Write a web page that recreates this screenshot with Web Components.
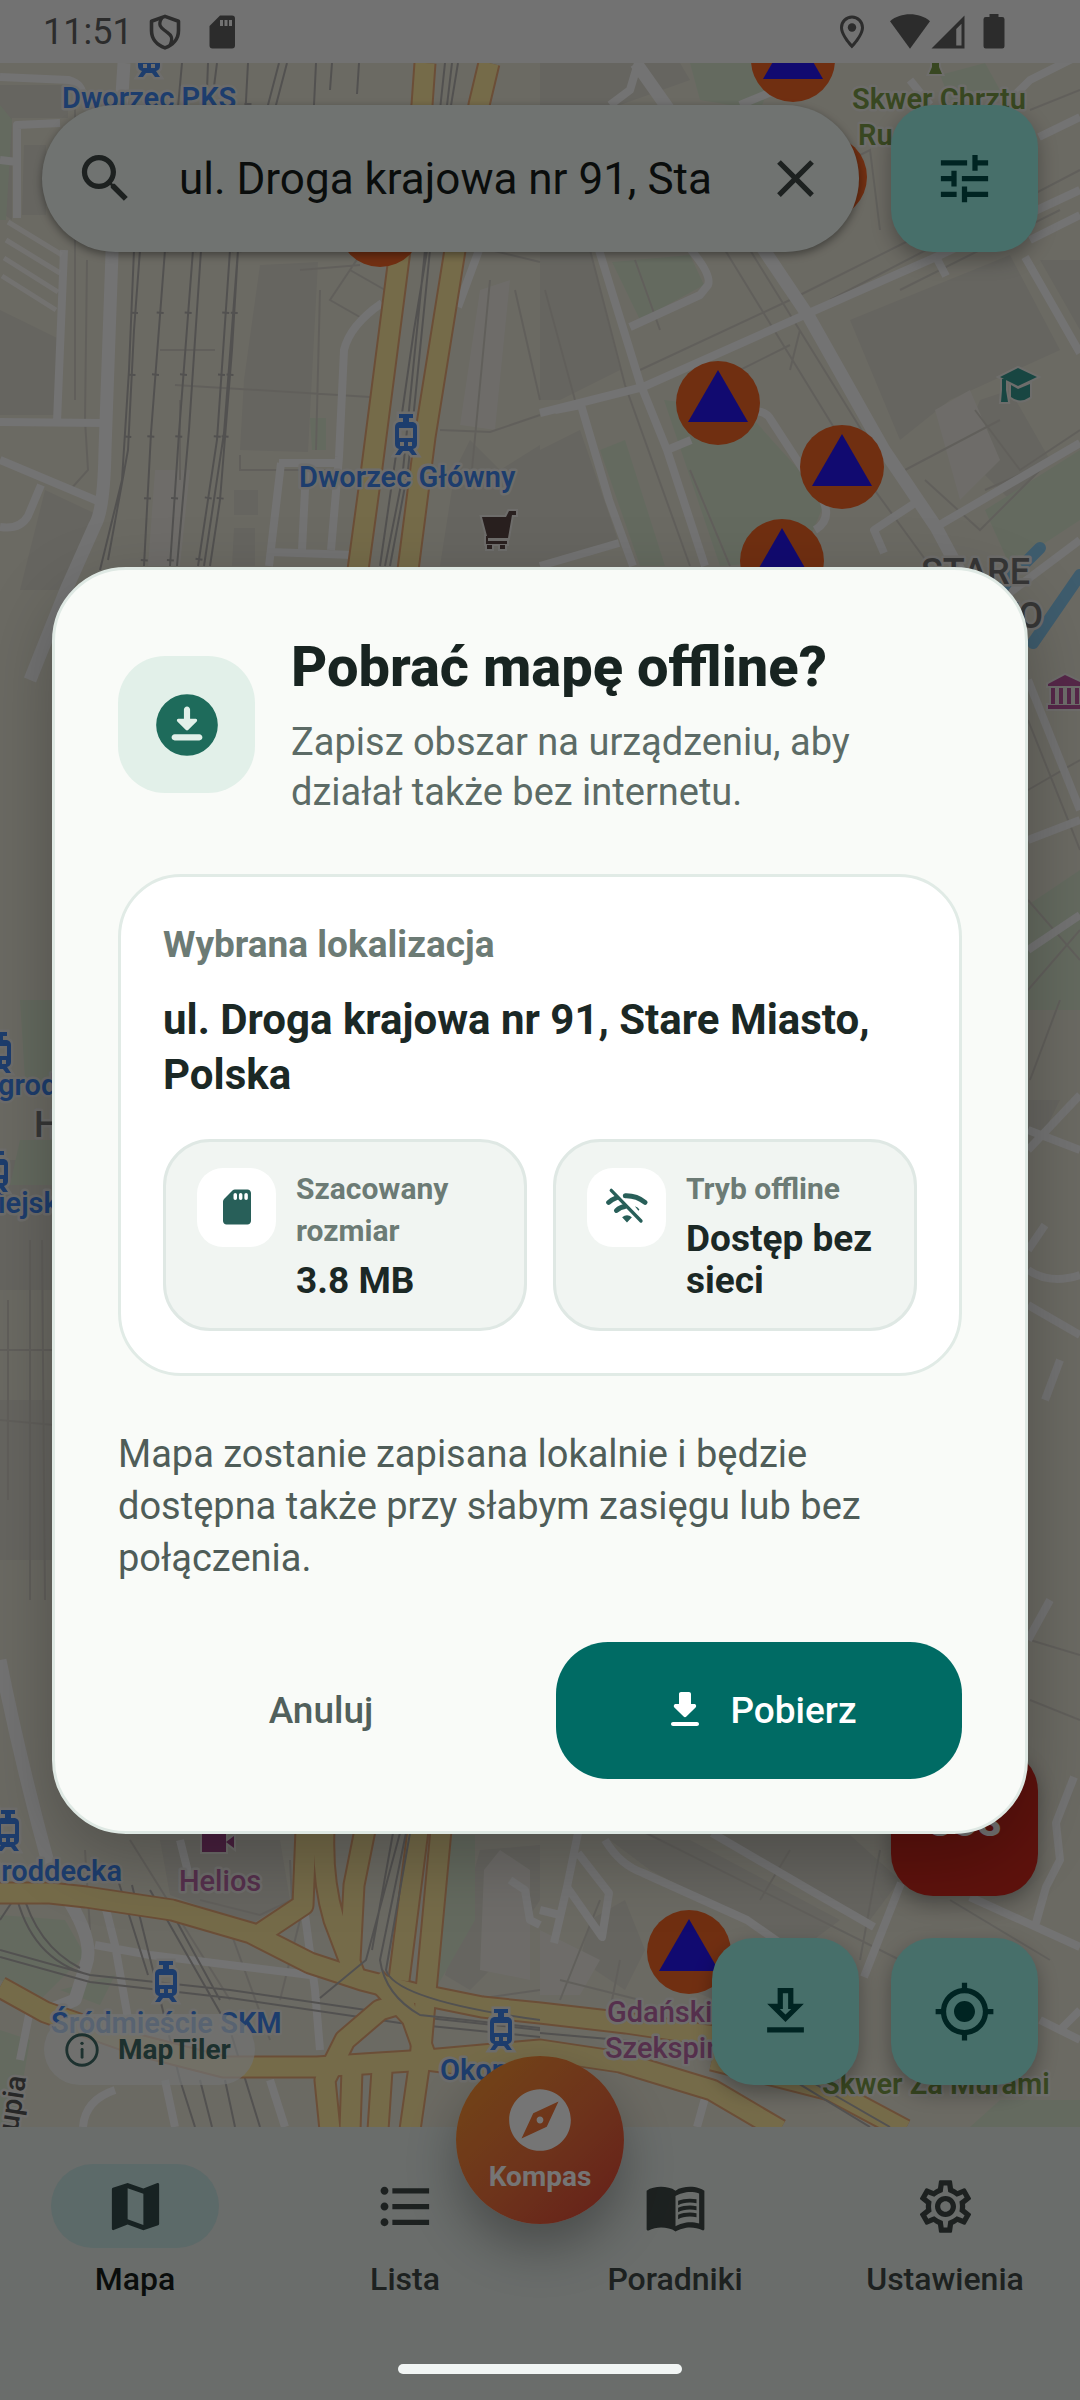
<!DOCTYPE html>
<html lang="pl">
<head>
<meta charset="utf-8">
<meta name="viewport" content="width=device-width, initial-scale=1">
<title>Mapa</title>
<style>
  body {
    margin: 0;
    font-family: Roboto, "Noto Sans", sans-serif;
    background: #f8f8f8;
  }
</style>
</head>
<body>

<app-screen>
  <status-bar slot="status" time="11:51"></status-bar>

  <city-map slot="map"></city-map>
  <search-bar slot="search" value="ul. Droga krajowa nr 91, Sta"></search-bar>
  <map-fab slot="search" icon="tune" label="Filtry"></map-fab>

  <map-credit slot="credit">MapTiler</map-credit>
  <map-fab slot="fabs" class="sos" variant="danger" label="SOS">SOS</map-fab>
  <map-fab slot="fabs" icon="download-outline" label="Pobierz mapę"></map-fab>
  <map-fab slot="fabs" icon="location" label="Moja lokalizacja"></map-fab>

  <app-nav slot="nav">
    <nav-item icon="map" active>Mapa</nav-item>
    <nav-item icon="list">Lista</nav-item>
    <nav-item icon="book">Poradniki</nav-item>
    <nav-item icon="settings">Ustawienia</nav-item>
    <compass-button slot="center">Kompas</compass-button>
  </app-nav>

  <offline-dialog slot="dialog">
    <span slot="title">Pobrać mapę offline?</span>
    <span slot="subtitle">Zapisz obszar na urządzeniu, aby<br>działał także bez internetu.</span>
    <location-card>
      <span slot="label">Wybrana lokalizacja</span>
      <span slot="place">ul. Droga krajowa nr 91, Stare Miasto, Polska</span>
      <stat-tile icon="sd" label="Szacowany rozmiar">3.8 MB</stat-tile>
      <stat-tile icon="wifi-off" label="Tryb offline">Dostęp bez sieci</stat-tile>
    </location-card>
    <span slot="note">Mapa zostanie zapisana lokalnie i będzie<br>dostępna także przy słabym zasięgu lub bez<br>połączenia.</span>
  </offline-dialog>
</app-screen>

<script>
const icons = {
  search: '<path d="M15.5 14h-.79l-.28-.27C15.41 12.59 16 11.11 16 9.5 16 5.91 13.09 3 9.5 3S3 5.91 3 9.5 5.91 16 9.5 16c1.61 0 3.09-.59 4.23-1.57l.27.28v.79l5 4.99L20.49 19l-4.99-5zm-6 0C7.01 14 5 11.99 5 9.5S7.01 5 9.5 5 14 7.01 14 9.5 11.99 14 9.5 14z"/>',
  close: '<path d="M19 6.41 17.59 5 12 10.59 6.41 5 5 6.41 10.59 12 5 17.59 6.41 19 12 13.41 17.59 19 19 17.59 13.41 12z"/>',
  tune: '<path d="M3 17v2h6v-2H3zM3 5v2h10V5H3zm10 16v-2h8v-2h-8v-2h-2v6h2zM7 9v2H3v2h4v2h2V9H7zm14 4v-2H11v2h10zm-6-4h2V7h4V5h-4V3h-2v6z"/>',
  'download-outline': '<path d="M13 5v6h1.17L12 13.17 9.83 11H11V5h2m2-2H9v6H5l7 7 7-7h-4V3zm4 15H5v2h14v-2z"/>',
  location: '<path d="M12 8c-2.21 0-4 1.79-4 4s1.79 4 4 4 4-1.79 4-4-1.79-4-4-4zm8.94 3c-.46-4.17-3.77-7.48-7.94-7.94V1h-2v2.06C6.83 3.52 3.52 6.83 3.06 11H1v2h2.06c.46 4.17 3.77 7.48 7.94 7.94V23h2v-2.06c4.17-.46 7.48-3.77 7.94-7.94H23v-2h-2.06zM12 19c-3.87 0-7-3.13-7-7s3.13-7 7-7 7 3.13 7 7-3.13 7-7 7z"/>',
  map: '<path d="M20.5 3l-.16.03L15 5.1 9 3 3.36 4.9c-.21.07-.36.25-.36.48V20.5c0 .28.22.5.5.5l.16-.03L9 18.9l6 2.1 5.64-1.9c.21-.07.36-.25.36-.48V3.5c0-.28-.22-.5-.5-.5zM15 19l-6-2.11V5l6 2.11V19z"/>',
  list: '<path d="M4 10.5c-.83 0-1.5.67-1.5 1.5s.67 1.5 1.5 1.5 1.5-.67 1.5-1.5-.67-1.5-1.5-1.5zm0-6c-.83 0-1.5.67-1.5 1.5S3.17 7.5 4 7.5 5.5 6.83 5.5 6 4.83 4.5 4 4.5zm0 12c-.83 0-1.5.68-1.5 1.5s.68 1.5 1.5 1.5 1.5-.68 1.5-1.5-.67-1.5-1.5-1.5zM7 19h14v-2H7v2zm0-6h14v-2H7v2zm0-8v2h14V5H7z"/>',
  book: '<path d="M21 5c-1.11-.35-2.33-.5-3.5-.5-1.95 0-4.05.4-5.5 1.5-1.45-1.1-3.55-1.5-5.5-1.5S2.45 4.9 1 6v14.65c0 .25.25.5.5.5.1 0 .15-.05.25-.05C3.1 20.45 5.05 20 6.5 20c1.95 0 4.05.4 5.5 1.5 1.35-.85 3.8-1.5 5.5-1.5 1.65 0 3.35.3 4.75 1.05.1.05.15.05.25.05.25 0 .5-.25.5-.5V6c-.6-.45-1.25-.75-2-1zm0 13.5c-1.1-.35-2.3-.5-3.5-.5-1.7 0-4.15.65-5.5 1.5V8c1.35-.85 3.8-1.5 5.5-1.5 1.2 0 2.4.15 3.5.5v11.5z"/><path d="M17.5 10.5c.88 0 1.73.09 2.5.26V9.24c-.79-.15-1.64-.24-2.5-.24-1.7 0-3.24.29-4.5.83v1.66c1.13-.64 2.7-.99 4.5-.99zM13 12.49v1.66c1.13-.64 2.7-.99 4.5-.99.88 0 1.73.09 2.5.26V11.9c-.79-.15-1.64-.24-2.5-.24-1.7 0-3.24.3-4.5.83zM17.5 14.33c-1.7 0-3.24.29-4.5.83v1.66c1.13-.64 2.7-.99 4.5-.99.88 0 1.73.09 2.5.26v-1.52c-.79-.16-1.64-.24-2.5-.24z"/>',
  settings: '<path d="M19.43 12.98c.04-.32.07-.64.07-.98s-.03-.66-.07-.98l2.11-1.65c.19-.15.24-.42.12-.64l-2-3.46c-.09-.16-.26-.25-.44-.25-.06 0-.12.01-.17.03l-2.49 1c-.52-.4-1.08-.73-1.69-.98l-.38-2.65C14.46 2.18 14.25 2 14 2h-4c-.25 0-.46.18-.49.42l-.38 2.65c-.61.25-1.17.59-1.69.98l-2.49-1c-.06-.02-.12-.03-.18-.03-.17 0-.34.09-.43.25l-2 3.46c-.13.22-.07.49.12.64l2.11 1.65c-.04.32-.07.65-.07.98s.03.66.07.98l-2.11 1.65c-.19.15-.24.42-.12.64l2 3.46c.09.16.26.25.44.25.06 0 .12-.01.17-.03l2.49-1c.52.4 1.08.73 1.69.98l.38 2.65c.03.24.24.42.49.42h4c.25 0 .46-.18.49-.42l.38-2.65c.61-.25 1.17-.59 1.69-.98l2.49 1c.06.02.12.03.18.03.17 0 .34-.09.43-.25l2-3.46c.12-.22.07-.49-.12-.64l-2.11-1.65zm-1.98-1.71c.04.31.05.52.05.73 0 .21-.02.43-.05.73l-.14 1.13.89.7 1.08.84-.7 1.21-1.27-.51-1.04-.42-.9.68c-.43.32-.84.56-1.25.73l-1.06.43-.16 1.13-.2 1.35h-1.4l-.19-1.35-.16-1.13-1.06-.43c-.43-.18-.83-.41-1.23-.71l-.91-.7-1.06.43-1.27.51-.7-1.21 1.08-.84.89-.7-.14-1.13c-.03-.31-.05-.54-.05-.74s.02-.43.05-.73l.14-1.13-.89-.7-1.08-.84.7-1.21 1.27.51 1.04.42.9-.68c.43-.32.84-.56 1.25-.73l1.06-.43.16-1.13.2-1.35h1.39l.19 1.35.16 1.13 1.06.43c.43.18.83.41 1.23.71l.91.7 1.06-.43 1.27-.51.7 1.21-1.07.85-.89.7.14 1.13zM12 8c-2.21 0-4 1.79-4 4s1.79 4 4 4 4-1.79 4-4-1.79-4-4-4zm0 6c-1.1 0-2-.9-2-2s.9-2 2-2 2 .9 2 2-.9 2-2 2z"/>',
  compass: '<path d="M12 10.9c-.61 0-1.1.49-1.1 1.1s.49 1.1 1.1 1.1c.61 0 1.1-.49 1.1-1.1s-.49-1.1-1.1-1.1zM12 2C6.48 2 2 6.48 2 12s4.48 10 10 10 10-4.48 10-10S17.52 2 12 2zm2.19 12.19L6 18l3.81-8.19L18 6l-3.81 8.19z"/>',
  info: '<path d="M12 2a10 10 0 1 0 0 20 10 10 0 0 0 0-20zm0 18.3a8.3 8.3 0 1 1 0-16.6 8.3 8.3 0 0 1 0 16.6z"/><circle cx="12" cy="8" r="1"/><rect x="11.2" y="10.8" width="1.7" height="6.4" rx=".8"/>',
  download: '<path d="M16.59 9H15V4c0-.55-.45-1-1-1h-4c-.55 0-1 .45-1 1v5H7.41c-.89 0-1.34 1.08-.71 1.71l4.59 4.59c.39.39 1.02.39 1.41 0l4.59-4.59c.63-.63.19-1.71-.7-1.71zM5 19c0 .55.45 1 1 1h12c.55 0 1-.45 1-1s-.45-1-1-1H6c-.55 0-1 .45-1 1z"/>',
  'download-circle': '<path fill-rule="evenodd" d="M12 2a10 10 0 1 0 0 20 10 10 0 0 0 0-20zM11 7c0-.55.45-1 1-1s1 .45 1 1v3h1.8c.45 0 .67.54.35.85l-2.79 2.79c-.2.2-.51.2-.71 0L8.86 10.85c-.32-.31-.1-.85.35-.85H11V7zM16 17H8c-.55 0-1-.45-1-1s.45-1 1-1h8c.55 0 1 .45 1 1s-.45 1-1 1z"/>',
  sd: '<path fill-rule="evenodd" d="M18 2h-7.17c-.53 0-1.04.21-1.42.59L4.6 7.42c-.37.37-.6.88-.6 1.4V20c0 1.1.9 2 2 2h12c1.1 0 2-.9 2-2V4c0-1.1-.9-2-2-2zM10 5a1 1 0 0 1 2 0v2a1 1 0 0 1-2 0zm3.1 0a1 1 0 0 1 2 0v2a1 1 0 0 1-2 0zm3.1 0a1 1 0 0 1 2 0v2a1 1 0 0 1-2 0z"/>',
  'wifi-off': '<g fill="none" stroke="currentColor" stroke-linecap="round"><path stroke-width="2.8" d="M1.500 9.400Q3.500 7.600 6 6.700M6 14Q8.200 12 10.800 11.700"/><path stroke-width="2.8" d="M11 5.600Q17.500 5.400 22.300 9.400"/><path stroke-width="1.9" d="M3 2.500 20 20"/></g><path d="M9.200 17.800Q12 15.600 14.800 17.800L12 20.800zM16.500 11.500q1.800.6 2.600 1.900l-.6.8z"/>',
  shield: '<path fill="none" stroke="currentColor" stroke-width="2.4" stroke-linejoin="round" d="M12 1.600 21 4.800V11C21 16.500 17.500 20.700 12 22.600 6.500 20.700 3 16.500 3 11V4.800z"/><path fill="none" stroke="currentColor" stroke-width="2.2" d="M10 2.400C6.500 8 10 9.500 12.500 11.500S18 14.500 15.500 20.500"/>',
  'sd-sharp': '<path fill-rule="evenodd" d="M18 1H10L3 8v13a2 2 0 0 0 2 2h13a2 2 0 0 0 2-2V3a2 2 0 0 0-2-2zM10 4h2v4h-2zm3 0h2v4h-2zm3 0h2v4h-2z"/>',
  pin: '<path fill-rule="evenodd" d="M12 1C7.580 1 4 4.580 4 9c0 6 8 14 8 14s8-8 8-14c0-4.420-3.580-8-8-8zm0 2a6 6 0 0 1 6 6c0 3.500-3.500 8.200-6 11-2.500-2.800-6-7.500-6-11a6 6 0 0 1 6-6z"/><circle cx="12" cy="9" r="2.8"/>',
  wifi: '<path d="M12 22 0 5.500C6.500 0 17.500 0 24 5.500z"/>',
  signal: '<path fill-rule="evenodd" d="M23 1v22H1zM17.500 10v11H21V6.500z"/>',
  battery: '<path d="M9 0h6v2h2.500A1.500 1.500 0 0 1 19 3.500v18a1.500 1.500 0 0 1-1.500 1.500h-11A1.500 1.500 0 0 1 5 21.500v-18A1.500 1.500 0 0 1 6.500 2H9z"/>'
}

const define = (name, html, setup) => {
  const template = document.createElement('template')
  template.innerHTML = html

  customElements.define(name, class extends HTMLElement {
    connectedCallback() {
      if (this.shadowRoot) return
      this.attachShadow({ mode: 'open' })
      this.shadowRoot.appendChild(template.content.cloneNode(true))
      if (setup) setup(this, this.shadowRoot)
    }
  })
}

define('ui-icon', `
  <style>
    :host { display: block; flex: none; width: 63px; height: 63px; }
    svg { display: block; width: 100%; height: 100%; fill: currentColor; }
  </style>
  <svg viewBox="0 0 24 24" aria-hidden="true"></svg>
`, (el, root) => {
  root.querySelector('svg').innerHTML = icons[el.getAttribute('name')] || ''
})

// screen: status bar, map, navigation, then the dialog over a scrim
define('app-screen', `
  <style>
    :host { display: flex; flex-direction: column; position: relative; min-height: 100vh; }
    main { flex: 1; position: relative; overflow: hidden; }
    .search { position: absolute; top: 42px; left: 42px; right: 42px; display: flex; gap: 32px; }
    .credit { position: absolute; left: 44px; bottom: 42px; }
    .fabs {
      position: absolute; right: 42px; bottom: 42px;
      display: grid; grid-template-columns: auto auto; gap: 42px 32px;
    }
    ::slotted(.sos) { grid-column: 2; }
    .scrim {
      position: absolute; inset: 0; padding: 0 52px;
      display: flex; align-items: center; justify-content: center;
      background: rgba(0, 0, 0, .54);
    }
    .handle {
      position: absolute; bottom: 26px; left: 0; right: 0; margin: auto;
      width: 284px; height: 10px; border-radius: 5px; background: #f1f5f4;
    }
  </style>
  <slot name="status"></slot>
  <main>
    <slot name="map"></slot>
    <div class="search"><slot name="search"></slot></div>
    <div class="credit"><slot name="credit"></slot></div>
    <div class="fabs"><slot name="fabs"></slot></div>
  </main>
  <slot name="nav"></slot>
  <div class="scrim"><slot name="dialog"></slot></div>
  <div class="handle"></div>
`)

define('status-bar', `
  <style>
    :host {
      display: flex; align-items: center; justify-content: space-between;
      height: 63px; padding: 0 68px 0 43px; box-sizing: border-box;
      background: #f8f8f8; color: #606060; font-size: 36px;
    }
    div { display: flex; align-items: center; }
    ui-icon { width: 36px; height: 36px; }
    .left { gap: 14px; }
    .left ui-icon + ui-icon { margin-left: 8px; }
    .right ui-icon:first-child { margin-right: 20px; }
    .wifi { width: 40px; height: 40px; }
    .right .battery { margin-left: 10px; }
  </style>
  <div class="left">
    <span></span>
    <ui-icon name="shield"></ui-icon>
    <ui-icon name="sd-sharp"></ui-icon>
  </div>
  <div class="right">
    <ui-icon name="pin"></ui-icon>
    <ui-icon class="wifi" name="wifi"></ui-icon>
    <ui-icon name="signal"></ui-icon>
    <ui-icon class="battery" name="battery"></ui-icon>
  </div>
`, (el, root) => {
  root.querySelector('span').textContent = el.getAttribute('time')
})

define('search-bar', `
  <style>
    :host {
      display: flex; flex: 1; align-items: center; min-width: 0; height: 147px;
      padding: 0 32px; box-sizing: border-box; border-radius: 74px;
      background: #f3faf6; color: #3f4947; box-shadow: 0 3px 8px rgba(0, 0, 0, .4);
    }
    input {
      flex: 1; min-width: 0; margin: 0 32px 0 42px; padding: 0; border: 0; outline: 0;
      background: none; color: #171d1b; font: 44px Roboto, "Noto Sans", sans-serif;
    }
    button { padding: 0; border: 0; background: none; color: inherit; }
  </style>
  <ui-icon name="search"></ui-icon>
  <input type="text" aria-label="Szukaj adresu">
  <button type="button" aria-label="Wyczyść"><ui-icon name="close"></ui-icon></button>
`, (el, root) => {
  const input = root.querySelector('input')
  input.value = el.getAttribute('value')
  root.querySelector('button').addEventListener('click', () => {
    input.value = ''
    input.focus()
  })
})

define('map-fab', `
  <style>
    :host { display: block; flex: none; }
    button {
      display: flex; align-items: center; justify-content: center;
      width: 147px; height: 147px; padding: 0; border: 0; border-radius: 42px;
      background: #9cf1e8; color: #00504a; box-shadow: 0 8px 20px rgba(0, 0, 0, .3);
      font: 900 38px Roboto, "Noto Sans", sans-serif;
    }
    :host([variant="danger"]) button { background: #cd281e; color: #fff; }
  </style>
  <button type="button"><slot></slot></button>
`, (el, root) => {
  const button = root.querySelector('button')
  button.setAttribute('aria-label', el.getAttribute('label'))
  if (el.hasAttribute('icon')) {
    const icon = document.createElement('ui-icon')
    icon.setAttribute('name', el.getAttribute('icon'))
    button.appendChild(icon)
  }
})

define('map-credit', `
  <style>
    :host { display: block; }
    a {
      display: flex; align-items: center; gap: 16px; height: 71px; padding: 0 24px 0 18px;
      border-radius: 36px; background: rgba(247, 250, 249, .7); color: #3f6b66;
      font-size: 28px; font-weight: 700; text-decoration: none;
    }
    ui-icon { width: 40px; height: 40px; }
  </style>
  <a href="#maptiler"><ui-icon name="info"></ui-icon><slot></slot></a>
`)

define('app-nav', `
  <style>
    :host { display: block; position: relative; height: 273px; background: #e6ede9; }
    nav { display: grid; grid-template-columns: repeat(4, 1fr); padding-top: 37px; }
    .center { position: absolute; top: -71px; left: 0; right: 0; display: flex; justify-content: center; }
  </style>
  <nav><slot></slot></nav>
  <div class="center"><slot name="center"></slot></div>
`)

define('nav-item', `
  <style>
    :host { display: block; }
    a {
      display: flex; flex-direction: column; align-items: center; gap: 10px;
      color: #3f4947; font-size: 32px; line-height: 42px; font-weight: 500; text-decoration: none;
    }
    .pill {
      display: flex; align-items: center; justify-content: center;
      width: 168px; height: 84px; border-radius: 42px;
    }
    :host([active]) .pill { background: #c8e6e4; }
    :host([active]) a { color: #171d1b; }
    :host([active]) ui-icon { color: #324b4a; }
  </style>
  <a href="#"><span class="pill"></span><slot></slot></a>
`, (el, root) => {
  root.querySelector('.pill').innerHTML = `<ui-icon name="${el.getAttribute('icon')}"></ui-icon>`
})

define('compass-button', `
  <style>
    :host { display: block; }
    button {
      display: flex; flex-direction: column; align-items: center; justify-content: center;
      width: 168px; height: 168px; padding: 0; border: 0; border-radius: 50%;
      background: linear-gradient(135deg, #fb9a32, #ee6f3c 55%, #dc4338);
      box-shadow: 0 24px 50px rgba(0, 0, 0, .3);
      color: #fff; font: 700 28px/40px Roboto, "Noto Sans", sans-serif;
    }
    ui-icon { width: 74px; height: 74px; }
  </style>
  <button type="button"><ui-icon name="compass"></ui-icon><slot></slot></button>
`)

define('offline-dialog', `
  <style>
    :host {
      display: block; flex: 1; max-width: 1200px; padding: 63px 63px 52px; box-sizing: border-box;
      border: 3px solid #dfe9e4; border-radius: 74px; background: #f9fbf8;
      box-shadow: 0 24px 70px rgba(0, 0, 0, .25);
    }
    header { display: flex; align-items: center; gap: 36px; margin-bottom: 57px; }
    .badge {
      display: flex; flex: none; align-items: center; justify-content: center;
      width: 137px; height: 137px; border-radius: 47px; background: #e2f0e9; color: #1e6b5b;
    }
    .badge ui-icon { width: 74px; height: 74px; }
    h2 { margin: 0 0 16px; color: #182421; font-size: 56px; line-height: 68px; font-weight: 800; }
    p { margin: 0; color: #5c6b66; font-size: 38px; line-height: 50px; }
    .note { margin: 52px 0 58px; color: #4f5d58; line-height: 52px; }
    footer { display: grid; grid-template-columns: 1fr 1fr; gap: 32px; }
    button {
      display: flex; align-items: center; justify-content: center; gap: 21px;
      height: 137px; padding: 0; border: 0; border-radius: 52px;
      background: none; color: #51605b; font: 500 37px Roboto, "Noto Sans", sans-serif;
    }
    .primary { background: #006b64; color: #fff; }
    .primary ui-icon { width: 48px; height: 48px; }
  </style>
  <header>
    <div class="badge"><ui-icon name="download-circle"></ui-icon></div>
    <div>
      <h2><slot name="title"></slot></h2>
      <p><slot name="subtitle"></slot></p>
    </div>
  </header>
  <slot></slot>
  <p class="note"><slot name="note"></slot></p>
  <footer>
    <button type="button" class="cancel">Anuluj</button>
    <button type="button" class="primary"><ui-icon name="download"></ui-icon>Pobierz</button>
  </footer>
`)

define('location-card', `
  <style>
    :host {
      display: block; padding: 42px; border: 3px solid #e1ebe6; border-radius: 63px; background: #fff;
    }
    .label { color: #6c7b75; font-size: 37px; line-height: 52px; font-weight: 700; }
    .place { margin: 21px 0 37px; color: #1b2825; font-size: 42px; line-height: 55px; font-weight: 700; }
    .stats { display: grid; grid-template-columns: 1fr 1fr; gap: 26px; }
  </style>
  <div class="label"><slot name="label"></slot></div>
  <div class="place"><slot name="place"></slot></div>
  <div class="stats"><slot></slot></div>
`)

define('stat-tile', `
  <style>
    :host {
      display: flex; align-items: flex-start; gap: 20px; padding: 26px 31px;
      border: 3px solid #dfe8e4; border-radius: 47px; background: #f1f5f2;
    }
    .icon {
      display: flex; flex: none; align-items: center; justify-content: center;
      width: 79px; height: 79px; border-radius: 26px; background: #fff; color: #285f59;
    }
    .icon ui-icon { width: 42px; height: 42px; }
    .label { margin-bottom: 8px; color: #6c7b75; font-size: 30px; line-height: 42px; font-weight: 700; }
    .value { color: #1b2825; font-size: 37px; line-height: 42px; font-weight: 700; }
  </style>
  <div class="icon"></div>
  <div>
    <div class="label"></div>
    <div class="value"><slot></slot></div>
  </div>
`, (el, root) => {
  root.querySelector('.icon').innerHTML = `<ui-icon name="${el.getAttribute('icon')}"></ui-icon>`
  root.querySelector('.label').textContent = el.getAttribute('label')
})

define('city-map', `
  <style>
    :host { position: absolute; inset: 0; display: block; }
    svg { display: block; width: 100%; height: 100%; }
    .block { fill: #dedcd1; }
    .pale { fill: #efece4; }
    .park { fill: #dae7d0; }
    .road { fill: none; stroke: #fafafa; stroke-width: 8; stroke-linejoin: round; }
    .wide { stroke-width: 13; }
    .path { fill: none; stroke: #d3d0c7; stroke-width: 2; }
    .rail { fill: none; stroke: #b3b1af; stroke-width: 2; }
    .ties { fill: none; stroke: #b3b1af; stroke-width: 7; stroke-dasharray: 2 60; }
    .casing { fill: none; stroke: #eaaa78; stroke-width: 23; stroke-linejoin: round; }
    .main { fill: none; stroke: #ffe9a0; stroke-width: 19; stroke-linejoin: round; }
    .water { fill: none; stroke: #88c8ee; stroke-width: 12; stroke-linecap: round; }
    text {
      font-family: Roboto, "Noto Sans", sans-serif; font-size: 29px; font-weight: 600;
      paint-order: stroke; stroke: #efeeea; stroke-width: 5; stroke-linejoin: round;
    }
    .stop { fill: #3f86ee; }
    .green { fill: #7b9c48; }
    .poi { fill: #bb69a8; font-weight: 500; }
    .area { fill: #777; font-size: 36px; font-weight: 500; }
    .street { fill: #555; font-weight: 500; }
  </style>
  <svg viewBox="0 63 1080 2064" preserveAspectRatio="xMidYMid slice" role="img" aria-label="Mapa miasta">
    <defs>
      <g id="pin">
        <circle r="42" fill="#f56627"/>
        <path d="M0-33 30 19H-30z" fill="#2716f4"/>
      </g>
      <g id="tram" stroke="#efeeea" stroke-width="5" paint-order="stroke" fill="#3f86ee">
        <path fill-rule="evenodd" d="M-7-20H7v4H3v4h4q4 1 4 5V10q0 4-4 5l4 6H6l-3-4h-6l-3 4h-5l4-6q-4-1-4-5V-7q0-4 4-5h4v-4h-4zM-7-6V4H7V-6zM-6 8v4h4V8zM2 8v4h4V8z"/>
      </g>
      <g id="network">
        <path d="M425 63 422 105 400 250 372 467 358 570M489 63 479 105 455 250 425 437 408 570"/>
        <path d="M0 1893H50L86 1897 172 1910 251 1933 310 1963 362 1980 413 1993 482 2007 540 2013 626 2023 720 2037"/>
        <path d="M0 1987 45 2012 138 2045 224 2067H317L379 2063 427 2060 540 2075"/>
        <path d="M306 1830 303 1905 258 1935M324 1830Q322 1880 334 1920L356 1978M365 1830 354 1885 350 1960M418 1830 399 1980M441 1830 427 1980 420 2060 410 2130"/>
        <path d="M413 2000 380 2010 345 2040 325 2080 330 2130M352 2070 350 2130M382 2070 378 2130M375 1978 412 2018 427 2060 540 2050 620 2062 712 2090 780 2130"/>
        <path d="M712 2060 830 2090 905 2130"/>
      </g>
    </defs>

    <rect y="0" width="1080" height="2200" fill="#e9e6d7"/>

    <path class="block" d="M0 85H68V118H12V220L0 212zM24 145H46V215H22zM0 310 57 338V415H0zM45 490 98 515 62 590H20zM260 265 318 262 308 452 240 450 244 380zM234 490H258V515H234zM234 528H255V566H232zM455 470 470 440 500 470 540 445V566H440z"/>
    <path class="block" d="M540 63H680L690 80 620 105H540zM540 250H590L620 370 560 400 540 400zM540 450 580 430 618 540 540 562zM850 320 1010 255 1060 350 950 400 900 440zM980 400 1010 390 1050 460 1010 500 960 450zM1040 260H1080V330zM870 400 930 500M0 1160H54V1290H0zM0 1400H54V1560H0zM1028 1100H1060L1040 1140 1028 1150z"/>
    <path class="block" d="M480 1850 540 1845V1900L500 1960 470 1990 445 1975zM610 1840H690L840 1920 800 1950 650 1870zM720 1835H850L900 1880 870 1920zM590 1920 625 1900 645 1950 625 1990 580 1960zM700 1950 760 1990 740 2010 690 1990zM160 1840H280L290 1900 250 1925 170 1895z"/>
    <path class="pale" d="M480 290 510 280 495 430 460 425zM155 470H190L180 566H148zM935 410 970 390 1000 460 960 500zM540 1930 600 1960 580 1995H540zM484 1870 500 1850 530 1870V1980L480 1970z"/>
    <path class="park" d="M0 105 12 120 6 220H0zM612 262 690 255 704 285 640 320zM664 400 745 410 826 500 800 560 720 566zM600 450 625 440 665 566H640zM310 418H326V450H312zM985 510 1080 450V520L1010 566zM1028 905 1080 870V1010H1028zM20 1000H54V1080H25zM20 1140H54V1185H10zM0 1915 65 1920 85 1955 40 2000 0 1980zM60 1990 115 1975 100 2005zM445 1835H475V1920L435 1990zM690 63H780L760 110 700 100zM940 75 985 63 1000 90 950 100zM1000 2100H1080V2127H970zM0 2030 30 2040 15 2127H0z"/>

    <path class="path" d="M75 90V400M87 260 85 420 88 470 70 490M300 270 360 265M320 290 316 450M360 255 330 300 365 320M160 350H215M175 385 370 397M180 400V480M490 250 540 262M515 290 540 400M440 430 490 432 540 415M490 280 470 490M370 240 350 270 385 290M240 455V470H330"/>
    <path class="path" d="M590 250 625 385 690 566M635 260 660 330M725 250 860 470 930 566M640 370 790 300 930 230M750 250 880 460M830 300 1080 170M905 470 1000 420M925 480 980 530 1040 470M975 410 1020 470 1080 430M720 380 790 345M545 290 575 400M690 470 730 566M800 330 790 370M985 490 1030 470M1030 110 1080 90M900 290 1060 210M810 180 870 150 880 230"/>
    <path class="path" d="M1028 790 1080 760M1028 720 1080 850M1028 900 1080 960M1028 990 1080 930M1030 1080 1060 1000M0 1350H54M0 1420 54 1425M8 1300V1500M30 1240V1600M42 1240 45 1600M600 1900 560 2000M640 1830 900 1960M790 1850 760 1900M880 1850 860 1960M290 1860 292 1900 260 1915 200 1900M230 1930 270 2040M300 1920 280 2000M470 2000 540 1990M560 1980 640 2000M620 1960 610 2010M1030 1700 1080 1720M1030 1640 1080 1655M950 1900 1050 1960M130 1840 230 2000M85 1850 90 1930"/>

    <path class="road wide" d="M124 63 112 253 105 450Q104 510 95 525L66 590 30 680M636 63 667 107 764 250 809 317 884 450 936 527 960 572M0 1660Q20 1760 50 1870M65 1895Q95 1940 86 1965L75 2000 50 2010"/>
    <path class="road" d="M0 77 69 80Q83 84 83 98M17 218V125L60 123M0 160 17 162M64 250 57 422M0 422 103 423M0 460 100 502M41 485 28 516Q20 530 0 527M382 303Q350 325 344 350L339 457 331 550M279 463H336M281 463 269 566M306 470 302 550M270 552 353 555M479 250 458 307"/>
    <path class="road" d="M540 413 643 387 809 313 936 257 1080 190M599 250 640 383 667 450 705 566M691 250Q712 275 708 285L700 295 630 327M555 410 581 405 609 500 633 566M540 566 619 543M745 412Q765 408 771 420L823 500Q832 520 815 530M667 450 691 440M936 527 1080 443M1025 257 1080 353M915 503 874 530 884 553M936 257 946 276M610 105 630 90 638 63M740 105 800 80M1039 137 1080 117M1030 240 1080 215M990 120 1030 80 1080 55M910 80 930 105M1000 600 1080 540"/>
    <path class="road" d="M1028 680 1080 810M1028 840 1080 820M1028 950 1080 915M1028 1150 1080 1095M1028 1130 1080 1150M1028 1270Q1050 1285 1080 1275M1028 1305 1080 1335M1028 1250 1045 1225M1045 1400 1060 1360M1028 1640 1050 1600"/>
    <path class="road" d="M578 1833 567 1887 554 1943M578 1853 609 1893 602 1937 567 1887M605 1840Q620 1865 643 1873L747 1920 790 1950M712 1833 815 1893 874 1927M901 1883 864 1977M970 1897 1080 1947M1074 1777 1056 1823 1060 1860 1046 1887 1036 1923M540 1910 560 1915M1040 2020 1080 2040M105 1905 115 1945 130 2030M95 1945 150 1955 310 1975M305 1915 315 1990 320 2050M510 1880 525 1890 530 1920 540 1925M30 2010 20 2060M115 2090Q85 2100 83 2127M165 2080 175 2127M270 2080 285 2127M180 1840 190 1880M740 2000 700 2040M1060 2030 1080 2010M710 2080 697 2127"/>

    <path class="rail" d="M140 250 134 330 128 450 108 560M134 250 129 370 122 480 100 570M182 63 165 250 151 433 144 566M217 63 193 250 179 433 170 566M208 63 201 250 189 430 177 566M248 63 238 250 224 433 204 566M287 63 238 250 232 350 220 500 210 566M279 63 230 250 217 440 198 566M332 63 330 90M316 63 314 105M359 63 357 94M445 63 425 250 402 480 385 566M452 63 430 250 408 470 390 566M458 63 414 330 380 566"/>
    <path class="ties" d="M137 250 131 400 124 480M165 250 151 433 144 566M193 250 179 433 170 566M238 250 232 350 220 500M230 250 217 440 198 566M248 105V63"/>
    <path class="rail" d="M0 1950 90 1975 230 1990 400 2015 540 2030M0 1957 90 1982 230 1998 400 2023 540 2037M15 1890Q30 1960 90 1975M22 1890Q36 1945 80 1968M118 1880 148 1975M132 1885 180 2080M150 1890 230 2030 260 2127M165 1900 220 2000M0 1920 20 1890"/>

    <use href="#network" class="casing"/>
    <use href="#network" class="main"/>

    <path class="rail" d="M400 1833 366 1960 320 1998M406 1833 380 1960Q385 1995 420 2015L540 2028M393 1833 372 1950M410 1833 386 1970Q395 2000 540 2020M180 2080 195 2127M200 2080 212 2127M225 2080 235 2127M540 2033 712 2048M760 2060 870 2127M770 2058 890 2127"/>
    <g stroke="#fff" stroke-width="5" opacity=".75" fill="none">
      <path d="M8 222 62 255M6 240 60 273M4 258 58 292M2 276 56 310"/>
    </g>
    <path class="water" d="M1080 575 1033 643M1040 548 1026 562M1012 575 1000 592"/>

    <text class="stop" x="62" y="108">Dworzec PKS</text>
    <text class="stop" x="299" y="487">Dworzec Główny</text>
    <text class="stop" x="-2" y="1095">grod</text>
    <text class="stop" x="-2" y="1213">iejsk</text>
    <text class="stop" x="122" y="1881" text-anchor="end">Groddecka</text>
    <text class="stop" x="51" y="2033">Śródmieście SKM</text>
    <text class="stop" x="440" y="2080">Okopowa</text>
    <text class="green" x="852" y="109">Skwer Chrztu</text>
    <text class="green" x="858" y="145">Ru</text>
    <text class="green" x="822" y="2094">Skwer Za Murami</text>
    <text class="poi" x="179" y="1891">Helios</text>
    <text class="poi" x="607" y="2022">Gdański</text>
    <text class="poi" x="605" y="2058">Szekspir</text>
    <text class="area" x="1030" y="584" text-anchor="end">STARE</text>
    <text class="area" x="1043" y="628" text-anchor="end">MIASTO</text>
    <text class="area" x="34" y="1137">H</text>
    <text class="street" transform="translate(16 2142) rotate(-81)">rupia</text>

    <use href="#tram" x="149" y="56"/>
    <use href="#tram" x="406" y="434"/>
    <use href="#tram" x="0" y="1052"/>
    <use href="#tram" x="-3" y="1171"/>
    <use href="#tram" x="8" y="1830"/>
    <use href="#tram" x="166" y="1981"/>
    <use href="#tram" x="501" y="2029"/>
    <g stroke="#efeeea" stroke-width="4" paint-order="stroke">
      <path fill="#5a4744" fill-rule="evenodd" d="M482 517H506L509 511H516V515H512L508 538H488V541H507V544H486L486 536H487zM487 545h5v4h-5zM500 545h5v4h-5z"/>
      <path fill="#369a90" d="M1000 377 1018 368 1037 377 1018 386zM1011 385 1018 389 1030 384V397Q1020 404 1011 397zM1002 379H1006V390L1008 402H1001L1002 390z"/>
      <path fill="#bb569f" d="M1048 684 1065 675 1084 684V686H1048zM1051 688h4v16h-4zM1059 688h4v16h-4zM1067 688h4v16h-4zM1075 688h4v16h-4zM1048 705H1084V709H1048z"/>
      <path fill="#a0468a" d="M202 1830H226V1852H202zM226 1842 234 1836V1848z"/>
      <path fill="#7b9c48" d="M932 55h7v12l3 7h-13l3-7z"/>
    </g>

    <use href="#pin" x="793" y="60"/>
    <use href="#pin" x="380" y="225"/>
    <use href="#pin" x="825" y="177"/>
    <use href="#pin" x="718" y="403"/>
    <use href="#pin" x="842" y="467"/>
    <use href="#pin" x="782" y="561"/>
    <use href="#pin" x="689" y="1952"/>
  </svg>
`)
</script>
</body>
</html>
